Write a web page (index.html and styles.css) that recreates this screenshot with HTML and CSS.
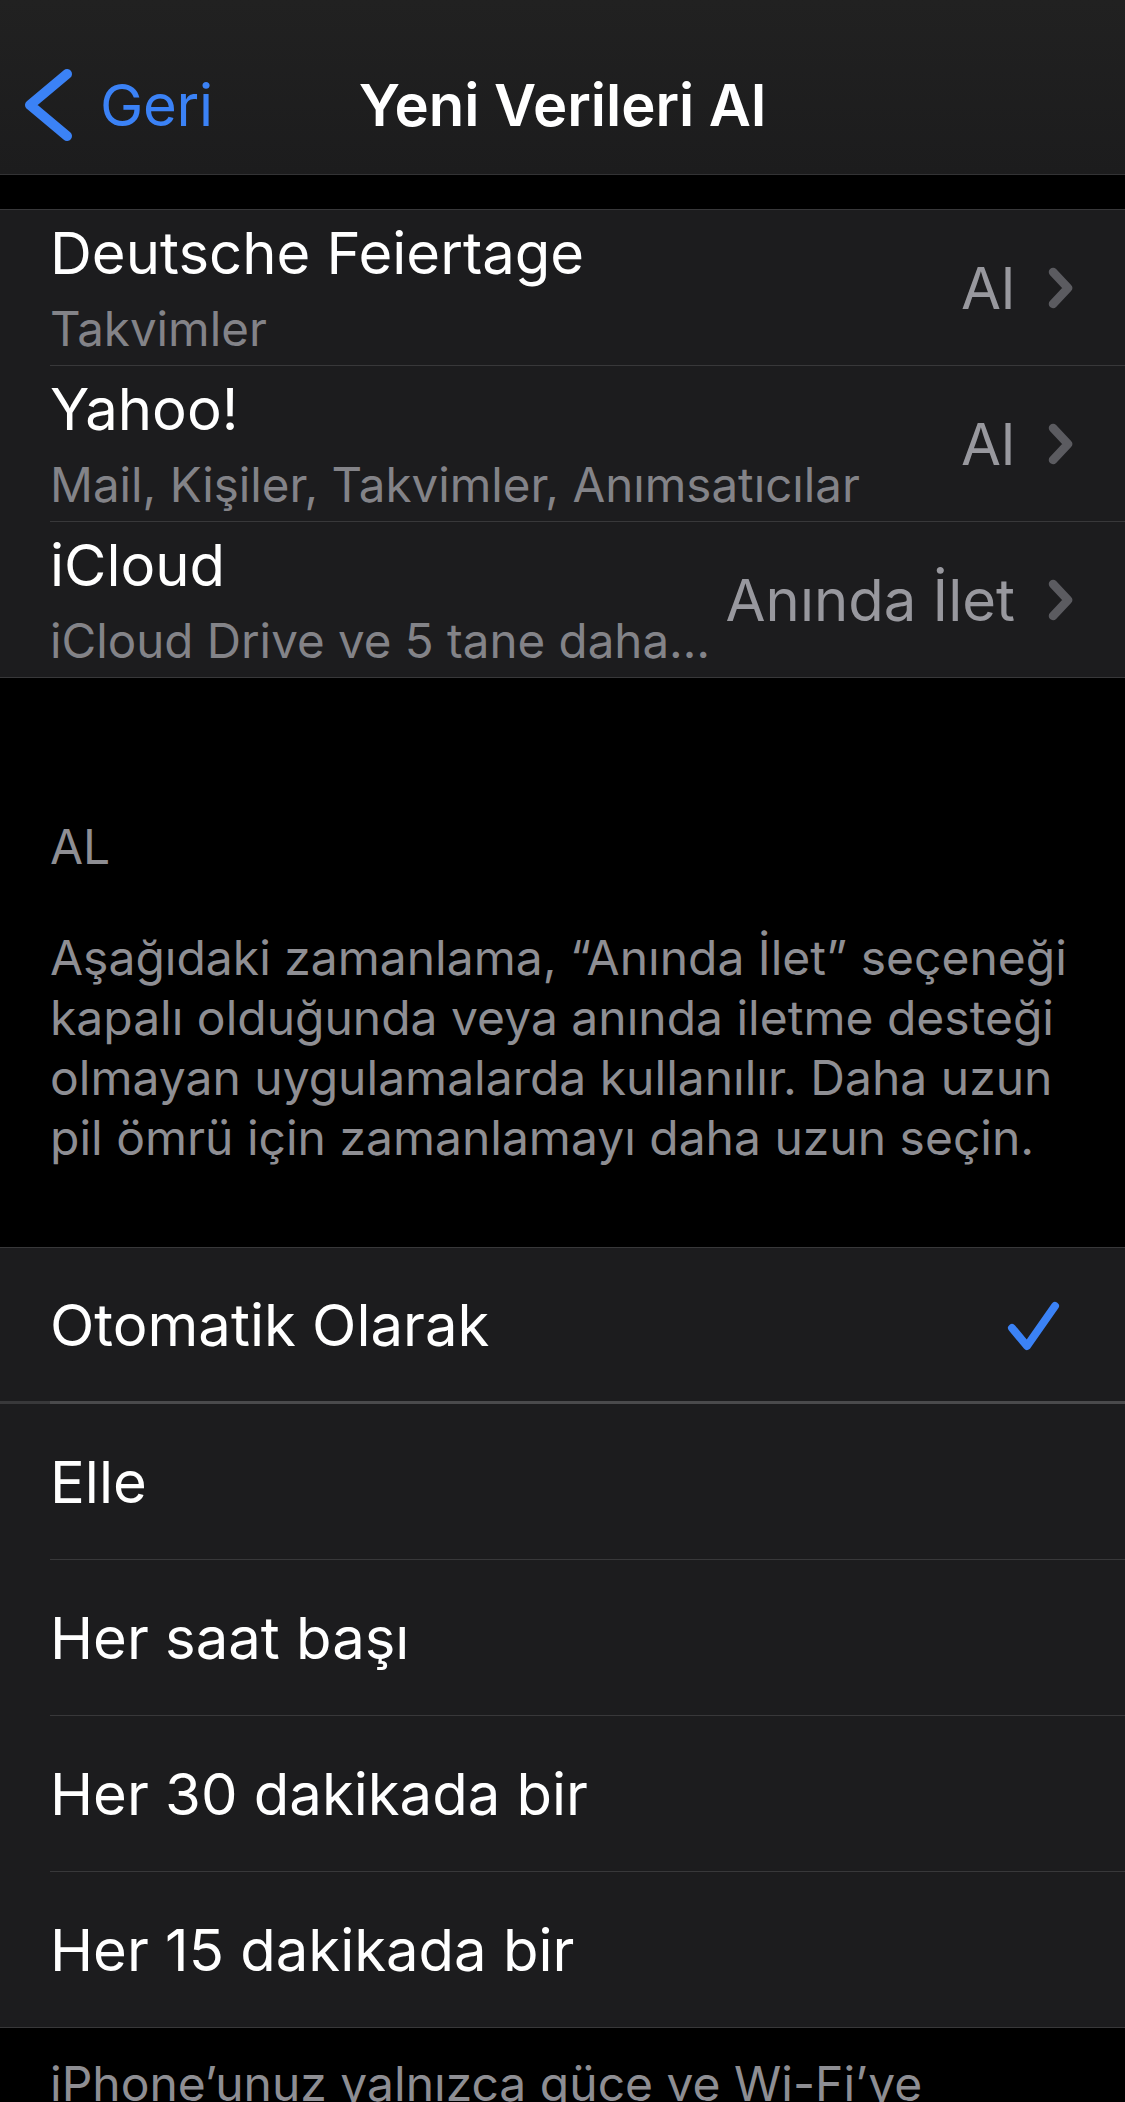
FILE: index.html
```html
<!DOCTYPE html>
<html lang="tr">
<head>
<meta charset="utf-8">
<title>Yeni Verileri Al</title>
<link rel="stylesheet" href="styles.css">
</head>
<body>
<div class="screen">
  <header class="nav">
    <a class="back">
      <svg class="back-chev" width="52" height="74" viewBox="0 0 52 74"><path d="M45 6 L8 37 L45 68" fill="none" stroke="#3b82f6" stroke-width="10" stroke-linecap="round" stroke-linejoin="round"/></svg>
      <span class="back-label">Geri</span>
    </a>
    <h1 class="title">Yeni Verileri Al</h1>
    <span class="nav-spacer"></span>
  </header>

  <section class="group group-accounts">
    <div class="row">
      <div class="row-inner">
        <div class="texts">
          <div class="row-title">Deutsche Feiertage</div>
          <div class="row-subtitle">Takvimler</div>
        </div>
        <span class="value">Al</span>
        <svg class="chev" width="26" height="46" viewBox="0 0 26 46"><path d="M6 7 L21 23 L6 39" fill="none" stroke="#5b5b60" stroke-width="8.5" stroke-linecap="round" stroke-linejoin="round"/></svg>
      </div>
    </div>
    <div class="row">
      <div class="row-inner">
        <div class="texts">
          <div class="row-title">Yahoo!</div>
          <div class="row-subtitle">Mail, Kişiler, Takvimler, Anımsatıcılar</div>
        </div>
        <span class="value">Al</span>
        <svg class="chev" width="26" height="46" viewBox="0 0 26 46"><path d="M6 7 L21 23 L6 39" fill="none" stroke="#5b5b60" stroke-width="8.5" stroke-linecap="round" stroke-linejoin="round"/></svg>
      </div>
    </div>
    <div class="row">
      <div class="row-inner">
        <div class="texts">
          <div class="row-title">iCloud</div>
          <div class="row-subtitle">iCloud Drive ve 5 tane daha…</div>
        </div>
        <span class="value">Anında İlet</span>
        <svg class="chev" width="26" height="46" viewBox="0 0 26 46"><path d="M6 7 L21 23 L6 39" fill="none" stroke="#5b5b60" stroke-width="8.5" stroke-linecap="round" stroke-linejoin="round"/></svg>
      </div>
    </div>
  </section>

  <div class="section-header">AL</div>
  <p class="section-desc">Aşağıdaki zamanlama, “Anında İlet” seçeneği<br>kapalı olduğunda veya anında iletme desteği<br>olmayan uygulamalarda kullanılır. Daha uzun<br>pil ömrü için zamanlamayı daha uzun seçin.</p>

  <section class="group group-schedule">
    <div class="row row-selected">
      <div class="row-inner">
        <span class="row-title single">Otomatik Olarak</span>
        <svg class="check" width="69" height="56" viewBox="0 0 69 56"><path d="M8 31 L23 49 L51 9" fill="none" stroke="#3b82f6" stroke-width="8" stroke-linecap="round" stroke-linejoin="round"/></svg>
      </div>
    </div>
    <div class="row">
      <div class="row-inner"><span class="row-title single">Elle</span></div>
    </div>
    <div class="row">
      <div class="row-inner"><span class="row-title single">Her saat başı</span></div>
    </div>
    <div class="row">
      <div class="row-inner"><span class="row-title single">Her 30 dakikada bir</span></div>
    </div>
    <div class="row">
      <div class="row-inner"><span class="row-title single">Her 15 dakikada bir</span></div>
    </div>
  </section>

  <p class="footer">iPhone’unuz yalnızca güce ve Wi-Fi’ye<br>bağlıyken arka planda yeni veriler alınır.</p>
</div>
</body>
</html>
```

FILE: styles.css
```css
* { box-sizing: border-box; }

html, body {
  margin: 0;
  padding: 0;
  background: #000;
}

body {
  font-family: Inter, "Noto Sans", "Liberation Sans", sans-serif;
  color: #fff;
}

.screen {
  width: 1125px;
  height: 2102px;
  overflow: hidden;
  background: #000;
}

/* Navigation bar */
.nav {
  height: 175px;
  padding: 68px 22px 32px 22px;
  background: linear-gradient(#212121, #1c1c1d);
  border-bottom: 1px solid #333335;
  display: grid;
  grid-template-columns: 1fr auto 1fr;
  align-items: center;
}

.back {
  display: flex;
  align-items: center;
  height: 74px;
  color: #3b82f6;
}

.back-chev { display: block; flex: none; }

.back-label {
  margin-left: 26px;
  font-size: 58px;
  line-height: 74px;
  letter-spacing: -0.3px;
}

.title {
  margin: 0;
  font-size: 58px;
  line-height: 74px;
  font-weight: 600;
  letter-spacing: 0;
  white-space: nowrap;
}

/* Groups & rows */
.group {
  background: #1c1c1e;
  border-top: 1px solid #38383a;
  border-bottom: 1px solid #38383a;
}

.group-accounts { margin-top: 34px; }

.row {
  padding-left: 50px;
}

.row-inner {
  display: flex;
  align-items: center;
  height: 156px;
  padding-right: 52px;
  border-bottom: 1px solid #38383a;
}

.row:last-child .row-inner {
  height: 155px;
  border-bottom: none;
}

.texts {
  flex: 1 1 auto;
  min-width: 0;
  display: flex;
  flex-direction: column;
}

.row-title {
  font-size: 58px;
  line-height: 70px;
  letter-spacing: 0;
  color: #fff;
  white-space: nowrap;
}

.row-title.single {
  flex: 1 1 auto;
}

.row-subtitle {
  margin-top: 12px;
  font-size: 47.5px;
  line-height: 58px;
  letter-spacing: 0;
  color: #838388;
  white-space: nowrap;
  overflow: hidden;
  text-overflow: ellipsis;
}

.value {
  flex: none;
  margin-left: 10px;
  font-size: 58px;
  line-height: 70px;
  letter-spacing: 0;
  color: #98989e;
  white-space: nowrap;
}

.chev {
  flex: none;
  display: block;
  margin-left: 32px;
}

.check {
  flex: none;
  display: block;
}

.row-selected {
  box-shadow: inset 0 -3px 0 #38383a;
}

.row-selected .row-inner {
  border-bottom: 3px solid #4a4a4c;
}

/* Section header & description */
.section-header {
  margin-top: 141px;
  padding-left: 50px;
  font-size: 48px;
  line-height: 56px;
  color: #8e8e93;
}

.section-desc {
  margin: 53px 0 0;
  padding: 0 30px 0 50px;
  font-size: 48px;
  line-height: 60px;
  letter-spacing: 0;
  color: #8e8e93;
  white-space: nowrap;
}

.group-schedule { margin-top: 79px; }

.footer {
  margin: 26px 0 0;
  padding: 0 50px;
  font-size: 48px;
  line-height: 60px;
  letter-spacing: 0;
  color: #8e8e93;
  white-space: nowrap;
}
```
